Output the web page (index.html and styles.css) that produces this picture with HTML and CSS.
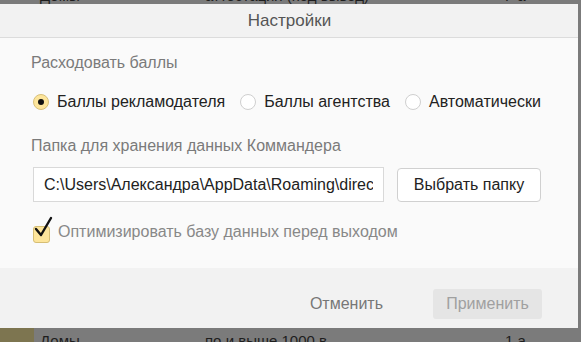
FILE: index.html
```html
<!DOCTYPE html>
<html lang="ru">
<head>
    <meta charset="UTF-8">
    <title>Настройки</title>
    <link rel="stylesheet" href="styles.css">
</head>
<body>

<!-- page behind the dialog -->
<div class="backdrop-row top-row">
    <span class="bg-a">Домы</span>
    <span class="bg-b">аттестация (под вывод)</span>
    <span class="bg-c">Г а</span>
</div>

<div class="dialog">
    <div class="dialog-head">Настройки</div>

    <div class="dialog-body">
        <div class="label">Расходовать баллы</div>
        <div class="radios">
            <label class="radio checked"><span class="dot"></span>Баллы рекламодателя</label>
            <label class="radio"><span class="dot"></span>Баллы агентства</label>
            <label class="radio"><span class="dot"></span>Автоматически</label>
        </div>

        <div class="label">Папка для хранения данных Коммандера</div>
        <div class="folder">
            <input class="path" type="text" readonly value="C:\Users\Александра\AppData\Roaming\direct-commander">
            <button class="btn">Выбрать папку</button>
        </div>

        <label class="check">
            <span class="box">
                <svg width="22" height="24" viewBox="0 0 22 24">
                    <path d="M3 13 L8 19 L18 2" fill="none" stroke="#111" stroke-width="2.4" stroke-linecap="round" stroke-linejoin="round"/>
                </svg>
            </span>
            Оптимизировать базу данных перед выходом
        </label>
    </div>

    <div class="dialog-foot">
        <button class="link-btn">Отменить</button>
        <button class="apply">Применить</button>
    </div>
</div>

<div class="backdrop-row bottom-row">
    <span class="bg-y"></span>
    <span class="bg-a">Домы</span>
    <span class="bg-b">по и выше 1000 в</span>
    <span class="bg-c">1 а</span>
</div>

</body>
</html>
```

FILE: styles.css
```css
* {
    box-sizing: border-box;
}

body {
    margin: 0;
    background-color: #7b7b7b;
    font-family: 'Liberation Sans', Arial, sans-serif;
    font-size: 16px;
    width: 581px;
    height: 342px;
    overflow: hidden;
}

.backdrop-row {
    position: relative;
    overflow: hidden;
    color: #1e1e1e;
    font-size: 15px;
    white-space: nowrap;
}

.top-row {
    height: 4px;
}

.top-row span {
    position: absolute;
    top: -13px;
}

.bottom-row {
    height: 14px;
}

.bottom-row span {
    position: absolute;
    top: 4px;
}

.bg-a { left: 40px; }
.bg-b { left: 205px; }
.bg-c { left: 505px; }

.bottom-row .bg-y {
    left: 0;
    top: 0;
    width: 34px;
    height: 14px;
    background: #7d7550;
}

.dialog {
    width: 578px;
    background: #fafafa;
}

.dialog-head {
    height: 34px;
    background: #f2f2f2;
    border-bottom: 1px solid #dcdcdc;
    text-align: center;
    line-height: 33px;
    color: #555;
    font-size: 17px;
    padding-left: 1px;
}

.dialog-body {
    padding: 16px 31px 0 31px;
    height: 230px;
}

.label {
    color: #7a7a7a;
    line-height: 18px;
}

.radios {
    display: flex;
    gap: 15px;
    margin: 21px 0 0 2px;
    height: 18px;
    align-items: center;
    color: #222;
}

.radios + .label {
    margin-top: 26px;
}

.radio {
    display: flex;
    align-items: center;
    gap: 8px;
}

.dot {
    width: 16px;
    height: 16px;
    border-radius: 50%;
    border: 1px solid #cfcfcf;
    background: #fff;
    position: relative;
}

.radio.checked .dot {
    background: #fde59b;
    border-color: #d8c07a;
}

.radio.checked .dot::after {
    content: '';
    position: absolute;
    left: 4px;
    top: 4px;
    width: 6px;
    height: 6px;
    border-radius: 50%;
    background: #111;
}

.folder {
    display: flex;
    gap: 13px;
    margin: 12px 0 0 2px;
}

.path {
    width: 351px;
    height: 35px;
    margin: 0;
    background: #fff;
    border: 1px solid #d9d9d9;
    border-radius: 0;
    padding: 0 10px;
    font-family: inherit;
    font-size: 16px;
    color: #222;
    outline: none;
}

.btn {
    width: 144px;
    height: 34px;
    margin-top: 1px;
    background: #fff;
    border: 1px solid #d0d0d0;
    border-radius: 4px;
    font-family: inherit;
    font-size: 16px;
    color: #222;
}

.check {
    display: flex;
    align-items: center;
    gap: 8px;
    margin: 21px 0 0 2px;
    color: #888;
    height: 18px;
}

.box {
    width: 17px;
    height: 17px;
    flex-shrink: 0;
    border-radius: 3px;
    background: #fde59b;
    border: 1px solid #d6be74;
    position: relative;
    margin-top: 4px;
}

.box svg {
    position: absolute;
    left: -1px;
    top: -11px;
}

.dialog-foot {
    height: 60px;
    background: #f2f2f2;
    display: flex;
    align-items: center;
    justify-content: flex-end;
    padding-right: 36px;
    gap: 50px;
}

.link-btn {
    background: none;
    border: none;
    font-family: inherit;
    font-size: 16px;
    color: #777;
    padding: 0;
    margin-top: 11px;
}

.apply {
    width: 109px;
    height: 30px;
    margin-top: 11px;
    background: #e5e5e5;
    border: none;
    border-radius: 3px;
    font-family: inherit;
    font-size: 16px;
    color: #a0a0a0;
}
```
